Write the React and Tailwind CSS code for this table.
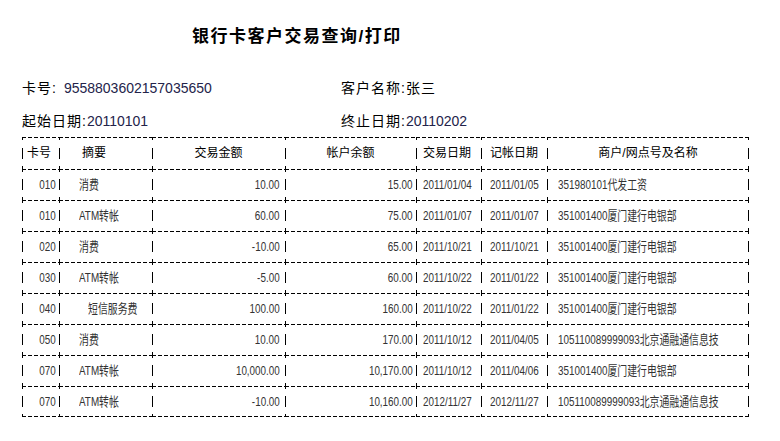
import React from 'react';

const rows = [
  ['010', '消费', '10.00', '15.00', '2011/01/04', '2011/01/05', '351980101代发工资'],
  ['010', 'ATM转帐', '60.00', '75.00', '2011/01/07', '2011/01/07', '351001400厦门建行电银部'],
  ['020', '消费', '-10.00', '65.00', '2011/10/21', '2011/10/21', '351001400厦门建行电银部'],
  ['030', 'ATM转帐', '-5.00', '60.00', '2011/10/22', '2011/01/22', '351001400厦门建行电银部'],
  ['040', '短信服务费', '100.00', '160.00', '2011/10/22', '2011/01/22', '351001400厦门建行电银部', true],
  ['050', '消费', '10.00', '170.00', '2011/10/12', '2011/04/05', '105110089999093北京通融通信息技'],
  ['070', 'ATM转帐', '10,000.00', '10,170.00', '2011/10/12', '2011/04/06', '351001400厦门建行电银部'],
  ['070', 'ATM转帐', '-10.00', '10,160.00', '2012/11/27', '2012/11/27', '105110089999093北京通融通信息技'],
];

const font = "font-['Liberation_Sans','Noto_Sans_CJK_SC',sans-serif]";

// dashed grid drawn with background layers (top line + left tick/segment/tick)
const LINES = 'p-0 align-middle bg-no-repeat [background-image:repeating-linear-gradient(90deg,#000_0_4px,transparent_4px_6px),linear-gradient(#000,#000),linear-gradient(#000,#000),linear-gradient(#000,#000)] [background-size:100%_1px,1px_11px,1px_3px,1px_3px] [background-position:left_top,left_center,left_top,left_bottom]';
const LINES_END = 'p-0 align-middle bg-no-repeat [background-image:repeating-linear-gradient(90deg,#000_0_4px,transparent_4px_6px),linear-gradient(#000,#000),linear-gradient(#000,#000),linear-gradient(#000,#000),linear-gradient(#000,#000),linear-gradient(#000,#000),linear-gradient(#000,#000)] [background-size:100%_1px,1px_11px,1px_3px,1px_3px,1px_11px,1px_3px,1px_3px] [background-position:left_top,left_center,left_top,left_bottom,right_center,right_top,right_bottom]';
const LINES_LAST = 'p-0 align-middle bg-no-repeat [background-image:repeating-linear-gradient(90deg,#000_0_4px,transparent_4px_6px),repeating-linear-gradient(90deg,#000_0_4px,transparent_4px_6px),linear-gradient(#000,#000),linear-gradient(#000,#000),linear-gradient(#000,#000)] [background-size:100%_1px,100%_1px,1px_11px,1px_3px,1px_3px] [background-position:left_top,left_bottom,left_center,left_top,left_bottom]';
const LINES_LAST_END = 'p-0 align-middle bg-no-repeat [background-image:repeating-linear-gradient(90deg,#000_0_4px,transparent_4px_6px),repeating-linear-gradient(90deg,#000_0_4px,transparent_4px_6px),linear-gradient(#000,#000),linear-gradient(#000,#000),linear-gradient(#000,#000),linear-gradient(#000,#000),linear-gradient(#000,#000),linear-gradient(#000,#000)] [background-size:100%_1px,100%_1px,1px_11px,1px_3px,1px_3px,1px_11px,1px_3px,1px_3px] [background-position:left_top,left_bottom,left_center,left_top,left_bottom,right_center,right_top,right_bottom]';

const Narrow = ({ children, right = false }) => (
  <span className={`inline-block whitespace-nowrap scale-x-[0.76] ${right ? 'origin-right' : 'origin-left'}`}>{children}</span>
);

export default function App() {
  return (
    <div className={`w-[780px] h-[441px] bg-white text-black ${font}`}>
      {/* Title */}
      <div className="pt-[25px] pl-[192px] h-[71px]">
        <h1 className="text-[17px] leading-[24px] font-bold tracking-[1.5px]">银行卡客户交易查询/打印</h1>
      </div>

      {/* Info */}
      <div className="pl-[22px] text-[14px]">
        <div className="grid grid-cols-[319px_1fr] h-[35px] items-center">
          <div className="tracking-[1px]">卡号:<span className="ml-[7px] tracking-normal text-[#23234a]">9558803602157035650</span></div>
          <div className="tracking-[1px]">客户名称:张三</div>
        </div>
        <div className="grid grid-cols-[319px_1fr] h-[31px] items-center">
          <div className="tracking-[1px]">起始日期:<span className="tracking-normal text-[#23234a]">20110101</span></div>
          <div className="tracking-[1px]">终止日期:<span className="tracking-normal text-[#23234a]">20110202</span></div>
        </div>
      </div>

      {/* Table */}
      <div className="pl-[22px]">
        <table className="table-fixed border-separate border-spacing-0 w-[727px]">
          <colgroup>
            <col className="w-[37px]" />
            <col className="w-[93px]" />
            <col className="w-[133px]" />
            <col className="w-[131px]" />
            <col className="w-[65px]" />
            <col className="w-[66px]" />
            <col className="w-[202px]" />
          </colgroup>
          <thead>
            <tr className="h-[32px] text-[12px]">
              <th className={`${LINES} font-normal text-left pl-[5px]`}>卡号</th>
              <th className={`${LINES} font-normal text-left pl-[23px]`}>摘要</th>
              <th className={`${LINES} font-normal text-center`}>交易金额</th>
              <th className={`${LINES} font-normal text-center`}>帐户余额</th>
              <th className={`${LINES} font-normal text-left pl-[7px]`}>交易日期</th>
              <th className={`${LINES} font-normal text-left pl-[9px]`}>记帐日期</th>
              <th className={`${LINES_END} font-normal text-center`}>商户/网点号及名称</th>
            </tr>
          </thead>
          <tbody className="text-[13px] text-[#333]">
            {rows.map((r, i) => {
              const last = i === rows.length - 1;
              const c = last ? LINES_LAST : LINES;
              const e = last ? LINES_LAST_END : LINES_END;
              return (
                <tr key={i} className="h-[31px]">
                  <td className={`${c} text-right pr-[3px]`}><Narrow right>{r[0]}</Narrow></td>
                  <td className={`${c} ${r[7] ? 'pl-[29px]' : 'pl-[20px]'}`}><Narrow>{r[1]}</Narrow></td>
                  <td className={`${c} text-right pr-[5px]`}><Narrow right>{r[2]}</Narrow></td>
                  <td className={`${c} text-right pr-[3px]`}><Narrow right>{r[3]}</Narrow></td>
                  <td className={`${c} pl-[7px]`}><Narrow>{r[4]}</Narrow></td>
                  <td className={`${c} pl-[9px]`}><Narrow>{r[5]}</Narrow></td>
                  <td className={`${e} pl-[11px]`}><Narrow>{r[6]}</Narrow></td>
                </tr>
              );
            })}
          </tbody>
        </table>
      </div>
    </div>
  );
}
